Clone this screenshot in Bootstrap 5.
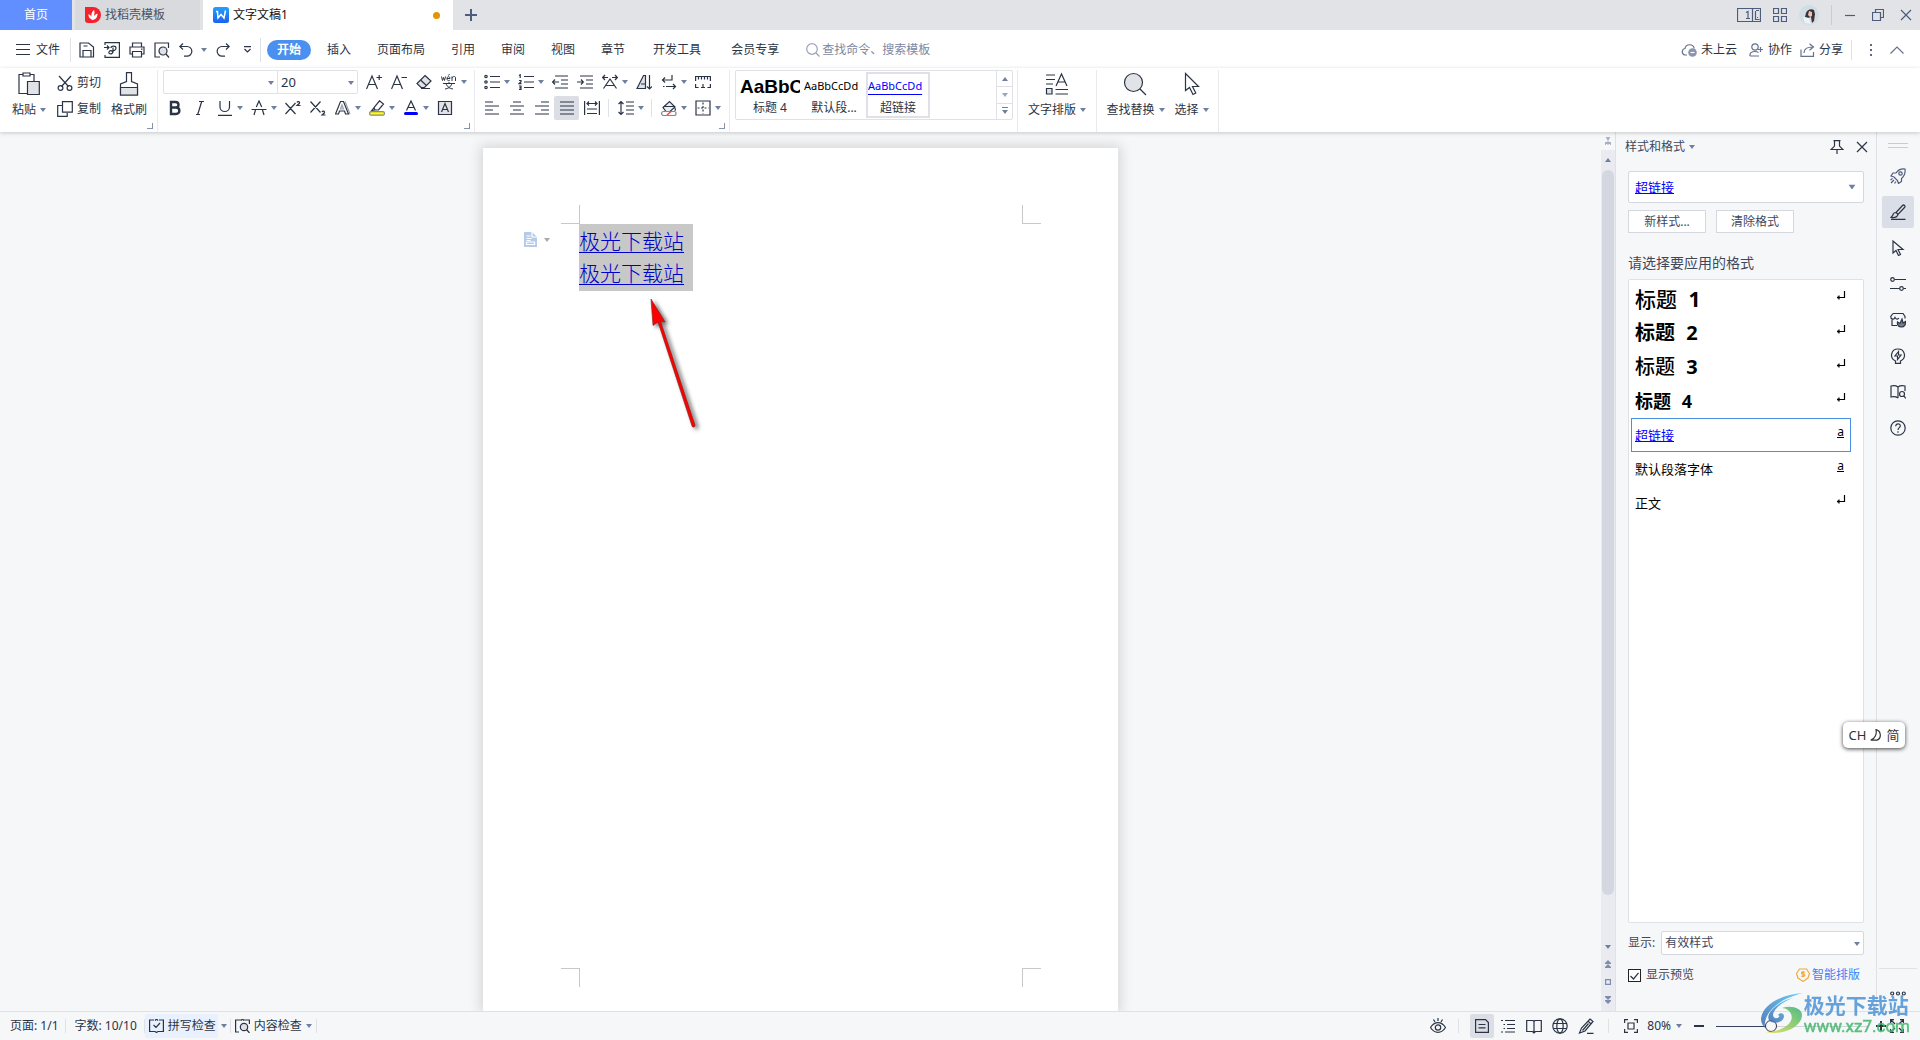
<!DOCTYPE html>
<html lang="zh-CN">
<head>
<meta charset="utf-8">
<meta name="viewport" content="width=device-width, initial-scale=1">
<title>文字文稿1</title>
<link href="https://cdn.jsdelivr.net/npm/bootstrap@5.3.0/dist/css/bootstrap.min.css" rel="stylesheet">
<style>
:root{--ink:#2b3445;--muted:#6f7f9f;--line:#dfe1e6;--surface:#f6f7f9}
body{font-family:"Noto Sans","Noto Sans CJK SC",sans-serif;font-size:12px;line-height:16px;color:var(--ink);background:var(--surface)}
button,input,select{font:inherit;color:inherit}
button{background:none;border:0;padding:0;white-space:nowrap}
a{color:inherit;text-decoration:none;white-space:nowrap}
svg{display:block;flex:none;fill:none;stroke:var(--ink);stroke-width:1.2}
svg.caret{width:6px;height:4px;fill:var(--muted);stroke:none}
select{appearance:none;outline:0;border:0;background:transparent}
/* title bar */
.titlebar{height:30px;background:#e1e3e7}
.titlebar svg{stroke:#4d5b7c}
.tab-home{width:72px;margin-right:3px;background:#628fff;color:#fff}
.tab-store{width:125px;padding-left:10px;margin-right:3px;background:#d9dadd;color:#4a5163}
.tab-doc{width:250px;padding-left:10px;background:#fff;color:#111}
.dirty{width:7px;height:7px;border-radius:50%;background:#e59400;margin-right:13px}
.tab-add{width:35px}
.win-ctl{gap:12px;padding-right:8px}
.vline{width:1px;background:var(--line)}
/* menu */
.menubar{height:38px;padding-top:1px;background:#fff}
.file-menu{padding-left:16px;gap:6px}
.quick{gap:9px;padding-left:8px}
.pill{height:20px;line-height:20px;width:44px;border-radius:10px;background:#4a90f0;color:#fff;font-weight:700;text-align:center}
.menus{padding-left:3px}
.menus a{padding:0 13px}
.menus a.wide{padding:0 15px}
.finder{border:0;outline:0;background:transparent;width:140px;padding:0}
.finder::placeholder{color:#7c87a3;opacity:1}
.menubar .soft{stroke:#66718d}
/* ribbon */
.ribbon{height:64px;background:#fff;padding-top:2px;box-shadow:0 1px 4px rgba(0,0,0,.2);z-index:3}
.ribbon-group{height:62px;border-right:1px solid #e9eaed;position:relative}
.launch{position:absolute;right:4px;bottom:3px;width:6px;height:6px;border:solid #8792ab;border-width:0 1px 1px 0}
.tool-row{height:24px;margin-bottom:2px}
.clip-pair{padding-top:1px;margin-left:11px}
.tool{width:25px;height:24px;display:flex;align-items:center;justify-content:center}
.tool.split{width:34px;justify-content:flex-start;padding-left:5px;gap:4px}
.tool.on,.view.on{background:#dbdfe5;border-radius:2px}
.tool-sep{width:9px;height:18px;display:flex;justify-content:center}
.combo{height:24px;border:1px solid var(--line);position:relative;background:#fff}
.combo input,.combo select{width:100%;height:100%;padding:0 3px;border:0;outline:0;background:transparent;display:block}
.combo .caret{position:absolute;right:3px;top:10px;pointer-events:none}
.font-name{width:115px;margin-left:1px;border-radius:2px 0 0 2px}
.font-size{width:80px;margin-right:3px;border-left:0;border-radius:0 2px 2px 0}
.font-size select{font-size:13px}
.big{height:48px;display:flex;flex-direction:column;align-items:center;justify-content:space-between;padding-top:2px}
.gallery{width:278px;height:50px;border:1px solid var(--line);border-radius:2px;padding-left:2px}
.sample{width:64px;height:46px;padding:3px 0 0;margin-top:1px;overflow:hidden;text-align:left;border:2px solid transparent}
.sample.on{border-color:#dfe0e8}
.sample span{display:block;height:23px;line-height:18px;color:#000;font-size:11px}
.sample b{display:block;font-weight:400;text-align:center;line-height:16px}
.sample .h4s{font:700 19px/19px "Liberation Sans",sans-serif}
.sample .lnk{color:#00f;text-decoration:underline;text-underline-offset:4px}
.gal-nav{width:16px;border-left:1px solid var(--line)}
.gal-nav button{flex:1;display:flex;align-items:center;justify-content:center}
.gal-nav button+button{border-top:1px solid var(--line)}
/* document */
.canvas{padding-top:16px;overflow:hidden}
.sheet{width:635px;background:#fff;box-shadow:0 0 12px 3px rgba(0,0,0,.13);padding:57px 77px 24px 78px;position:relative}
.mark-tl,.mark-tr,.mark-bl,.mark-br{width:19px;height:19px;border:0 solid #c8c8c8}
.mark-tl{border-width:0 1px 1px 0}.mark-tr{border-width:0 0 1px 1px}
.mark-bl{border-width:1px 1px 0 0}.mark-br{border-width:1px 0 0 1px}
.gutter{width:18px}
.gutter button{margin-left:-37px;margin-top:8px;display:flex;align-items:center;gap:7px}
.picked{background:#c8c8c8;padding:0 9px 3px 0;font:300 21px/32px "Noto Sans CJK SC",sans-serif;color:#0000c8}
.picked a{display:block;text-decoration:underline;text-decoration-thickness:1px;text-underline-offset:3px}
.pointer{position:absolute;left:160px;top:146px}
/* scroll bar */
.scroller{width:15px;background:#e9ebf0;border-right:1px solid var(--line)}
.scroller .splitter{height:18px;background:var(--surface);width:100%;display:flex;align-items:center;justify-content:center}
.thumb{width:12px;border-radius:6px;background:#d4d7e0}
.scroll-foot{gap:11px;padding:50px 0 7px}
/* style pane */
.pane{width:261px;padding:0 12px;border-right:1px solid var(--line);color:#3f4759}
.pane-head{height:30px;margin:0 -4px 0 -3px}
.pane .combo{border-color:#d5d8de;border-radius:2px}
.current{height:32px;margin-top:9px;color:#00f}
.current select{font-size:13px;padding:0 6px;text-decoration:underline}
.current .caret{right:8px;top:13px;transform:scale(1.2)}
.pane-btn{width:78px;height:23px;border:1px solid #d5d8de;background:#fff}
.pane-label{font-size:14px;line-height:20px;margin:20px 0 6px}
.pane-btns{gap:10px;padding-top:7px}
.styles{background:#fff;border:1px solid var(--line);border-radius:2px;padding:2px 12px 0 2px}
.styles button{width:100%;height:34px;border:1px solid transparent;padding:0 4px 0 3px;color:#000;font-size:13px;line-height:22px}
.styles button.on{border-color:#4a90e2;color:#00f}
.styles button.on span{text-decoration:underline}
.styles .h1s{font-size:21px;font-weight:500}
.styles .h2s{font-size:20px;font-weight:700}
.styles .h3s{font-size:20px;font-weight:500}
.styles .h4r{font-size:18px;font-weight:700}
.styles i{font-style:normal;font-weight:700;margin-left:6px}
.styles .kind{font-size:12px;line-height:12px;color:#000;border-bottom:1px solid #000;height:12px;margin:0 2px 6px 0}
.styles svg{stroke:#000;margin-bottom:8px}
.shown{height:24px}
.box-check{appearance:none;width:13px;height:13px;margin:0;border:1px solid #222;background:#fff;display:block}
.check-wrap{position:relative}
.check-wrap svg{position:absolute;left:2px;top:5px;pointer-events:none}
/* side rail */
.rail{width:43px;padding-right:2px}
.rail button{width:32px;height:32px;margin-bottom:4px;display:flex;align-items:center;justify-content:center;border-radius:2px}
.rail button.on{background:#dadee6}
.grip{width:20px;height:5px;border:solid #c9ccd2;border-width:1px 0;margin:11px 0 12px}
.rail-foot{width:38px;border-top:1px solid var(--line);padding-top:22px;height:43px}
/* status bar */
.statusbar{height:29px;border-top:1px solid var(--line)}
.statusbar .vline{height:14px}
.page-no{padding:0 6px 0 10px}
.word-no{padding:0 7px 0 9px}
.checker{height:24px;padding:0 2px 0 4px;background:#e8f1fd}
.views{gap:2px;margin:0 10px 0 11px}
.view{width:24px;height:24px;display:flex;align-items:center;justify-content:center}
.percent{gap:5px;padding-left:9px}
.fit{margin-left:15px}
.zoomer{appearance:none;width:152px;height:14px;margin:0 8px 0 12px;background:linear-gradient(90deg,#35415d 38%,#cfd4de 38%) center/100% 1px no-repeat}
.zoomer::-webkit-slider-thumb{appearance:none;width:12px;height:12px;border-radius:50%;border:1px solid #333;background:#f6f7f9}
/* floating items */
.ime{position:absolute;right:15px;bottom:292px;width:62px;height:26px;border-radius:5px;background:#fff;box-shadow:0 1px 4px rgba(0,0,0,.75);font-size:13px;color:#333;z-index:5}
.brand{position:absolute;right:10px;bottom:4px;z-index:6;opacity:.88;pointer-events:none}
.brand svg{stroke:none}
.brand strong{display:block;font:700 21px/24px "Noto Sans CJK SC",sans-serif;color:#5296d6}
.brand em{display:block;font:400 17px/20px Roboto,sans-serif;color:#45b86c;-webkit-text-stroke:.5px #45b86c}
</style>
<script src="https://cdn.jsdelivr.net/npm/bootstrap@5.3.0/dist/js/bootstrap.bundle.min.js"></script>
</head>
<body class="vh-100 overflow-hidden d-flex flex-column position-relative">
<svg width="0" height="0" class="position-absolute"><defs>
<symbol id="dn" viewBox="0 0 6 4"><path d="M0 0h6L3 4z"/></symbol>
<symbol id="up" viewBox="0 0 6 4"><path d="M0 4h6L3 0z"/></symbol>
</defs></svg>

<header class="titlebar d-flex align-items-stretch">
  <button class="tab-home">首页</button>
  <button class="tab-store d-flex align-items-center gap-1">
    <svg width="16" height="16" style="stroke:none"><path fill="#f5222d" d="M0 0h8a8 8 0 1 1 0 16H3a3 3 0 0 1-3-3z"/><path fill="#fff" d="M7.500 13C5 12 3 10 3.500 7c1.500 1 2.500 1.500 3 3C6 7 7 4.500 9 3c1 2 .5 4-.3 6.500C9.500 8 11 7 12.500 6.500 12.500 10 11 12.500 7.500 13z"/></svg>找稻壳模板</button>
  <button class="tab-doc d-flex align-items-center gap-1">
    <svg width="16" height="16"><defs><linearGradient id="wg" x2="0" y2="1"><stop stop-color="#22a0fb"/><stop offset="1" stop-color="#1a62f2"/></linearGradient></defs><rect width="16" height="16" rx="2.500" fill="url(#wg)" stroke="none"/><path stroke="#fff" stroke-width="1.500" d="M3 4.500h1.500L5 11l3-3.500 3 3.500 1.500-7.500"/></svg>
    <span class="flex-grow-1 text-start">文字文稿1</span><span class="dirty"></span></button>
  <button class="tab-add d-flex align-items-center justify-content-center" aria-label="新建"><svg width="12" height="12" style="stroke-width:2"><path d="M6 0v12M0 6h12"/></svg></button>
  <div class="win-ctl ms-auto d-flex align-items-center">
    <button aria-label="窗口"><svg width="24" height="14"><path d="M.5.500h23v13H.5zM15.500.500v13M9 4.500l2-1v7M9 10.500h4M18.500 3v8.500h4M19 2.500h3M20 9.500h1"/></svg></button>
    <button aria-label="应用"><svg width="14" height="14"><path d="M.5.500h5v5h-5zM8.500.500h5v5h-5zM.5 8.500h5v5h-5zM8.500 8.500h5v5h-5z"/></svg></button>
    <button aria-label="账号"><svg width="20" height="20" style="stroke:none"><circle cx="10" cy="10" r="10" fill="#cfdde4"/><path fill="#3f3035" d="M7 8c1-3 5-5 8-3l1 4-1 7-2 2-1-6-3 1-3-1z"/><path fill="#e9c3b4" d="M10 6l3 1v4l-2 1-2-2z"/><path fill="#e9f4f7" d="M4 12l6 1 2 6-6-1z"/></svg></button>
    <div class="vline" style="height:20px;background:#c8cbd2"></div>
    <button aria-label="最小化"><svg width="12" height="12"><path d="M1 6.500h10"/></svg></button>
    <button class="mx-1" aria-label="还原"><svg width="12" height="12"><path d="M.5 3.500h8v8h-8zM3.500 3V.500h8v8H9"/></svg></button>
    <button aria-label="关闭"><svg width="12" height="12"><path d="M1 1l10 10M11 1L1 11"/></svg></button>
  </div>
</header>

<nav class="menubar d-flex align-items-center">
  <button class="file-menu d-flex align-items-center"><svg width="14" height="11"><path d="M0 .500h14M0 5.500h14M0 10.500h14"/></svg><span class="pe-2">文件</span></button>
  <div class="vline" style="height:24px;margin-left:2px"></div>
  <div class="quick d-flex align-items-center">
    <button aria-label="保存"><svg width="16" height="16"><path d="M1 1h8.500l5 4v10H1zM4 15V8.500h8V15M4.500 4h4"/></svg></button>
    <button aria-label="输出为PDF"><svg width="16" height="16"><path d="M1 3V.600h14.400v14.800H1V13M0 5.500h5M3 3.500l2 2-2 2M7 6c0-2.500 5-2.500 5 0S9.500 9 8.500 8M9 5.500v4c0 3-5 3-4 .5s3-1 4 0"/></svg></button>
    <button aria-label="打印"><svg width="16" height="16"><path d="M3.500 5V1h9v4M3.500 12H1V5h14v7h-2.500M3.500 9.500h9V15h-9zM12 7.200h1.500"/></svg></button>
    <button aria-label="打印预览"><svg width="16" height="16"><path d="M6 15H1V1h13.500v5"/><circle cx="9" cy="9" r="4" fill="#dfe1e6"/><path d="M12 12l3 3.500"/></svg></button>
    <button class="d-flex align-items-center gap-2" aria-label="撤销"><svg width="14" height="14"><path d="M4 .500L.8 3.500 4 6.500M1 3.500h7a4.800 4.800 0 0 1 0 9.700H5"/></svg><svg class="caret"><use href="#dn"/></svg></button>
    <button aria-label="恢复"><svg width="14" height="14"><path d="M10 .500l3.200 3L10 6.500M13 3.500H6a4.800 4.800 0 0 0 0 9.700h3"/></svg></button>
    <button class="px-1" aria-label="更多"><svg width="9" height="7"><path d="M1 .600h7M1.500 3l3 3 3-3"/></svg></button>
  </div>
  <div class="vline" style="height:24px;margin:0 6px 0 4px"></div>
  <button class="pill">开始</button>
  <div class="menus d-flex">
    <a href="#">插入</a><a href="#">页面布局</a><a href="#">引用</a><a href="#">审阅</a><a href="#">视图</a><a href="#">章节</a><a href="#" class="wide">开发工具</a><a href="#" class="wide">会员专享</a>
  </div>
  <label class="d-flex align-items-center ps-2 ms-1" style="gap:2px"><svg width="14" height="14" style="stroke:#9aa3b8"><circle cx="6" cy="6" r="5.300"/><path d="M10 10l3.500 3.500"/></svg><input class="finder" placeholder="查找命令、搜索模板" aria-label="查找命令"></label>
  <div class="ms-auto d-flex align-items-center gap-2 pe-3">
    <button class="d-flex align-items-center gap-1 me-1"><svg class="soft" width="16" height="14"><path d="M6 12H4a3.300 3.300 0 0 1 0-6.500 4.700 4.700 0 0 1 9.200 0"/><circle cx="11.500" cy="9.500" r="4.300" fill="#8a94ab" stroke="none"/><path stroke="#fff" d="M9.500 9.500h4"/></svg>未上云</button>
    <button class="d-flex align-items-center gap-1"><svg class="soft" width="15" height="14"><circle cx="6" cy="4" r="3.200"/><path d="M1 13c-.5-3 1.500-4.500 5-4.500 1.500 0 2.500.300 3.500 1M1 13h9M11.500 4v5M9 6.500h5"/></svg>协作</button>
    <button class="d-flex align-items-center gap-1"><svg class="soft" width="15" height="14"><path d="M1 6.500v6.800h12.500V9M4 10c0-4 3-6 8.500-6M9.500.800l4 3.200-4 3.200"/></svg>分享</button>
    <div class="vline" style="height:20px"></div>
    <button class="px-1" aria-label="更多"><svg width="14" height="14" style="fill:#5f6980;stroke:none"><path d="M6 1h2v2H6zM6 6h2v2H6zM6 11h2v2H6z"/></svg></button>
    <button aria-label="收起"><svg class="soft" width="14" height="8"><path d="M.5 7.500L7 1l6.500 6.500"/></svg></button>
  </div>
</nav>

<section class="ribbon d-flex position-relative">
  <div class="ribbon-group d-flex" style="width:158px;padding-left:12px">
    <button class="big"><svg width="22" height="24"><path d="M5 2.500H1v19h8M16 9V2.500h-4M5 1h7v3H5z"/><path d="M9.500 9.500h11.800v13H9.500z" fill="#e1e3e7"/></svg><span class="d-flex align-items-center gap-1">粘贴<svg class="caret"><use href="#dn"/></svg></span></button>
    <div class="clip-pair">
      <button class="tool-row d-flex align-items-center gap-1"><svg width="16" height="16"><path d="M2 1l9.500 10.500M14 1L4.500 11.500"/><circle cx="3.500" cy="13" r="2.400"/><circle cx="12.500" cy="13" r="2.400"/></svg>剪切</button>
      <button class="tool-row d-flex align-items-center gap-1"><svg width="16" height="16"><path d="M5.500.600h9.800v10.500H5.500zM5 4.500H.7v10.800h9.500V12"/></svg>复制</button>
    </div>
    <button class="big" style="margin-left:10px"><svg width="20" height="24"><path d="M7.500 9.500V.600h5v8.900l6 2.500v11H1.500V12z"/><path d="M1.500 15.500h17V23h-17z" fill="#e1e3e7"/></svg><span>格式刷</span></button>
    <i class="launch"></i>
  </div>

  <div class="ribbon-group" style="width:317px;padding-left:4px">
    <div class="tool-row d-flex">
      <div class="combo font-name"><input aria-label="字体"><svg class="caret"><use href="#dn"/></svg></div>
      <div class="combo font-size"><select aria-label="字号"><option>20</option></select><svg class="caret"><use href="#dn"/></svg></div>
      <button class="tool" aria-label="增大字号"><svg width="16" height="16"><path d="M.5 15L6 2l5.500 13M2.500 10.500h7M10.500 3.500H16M13.200 1v5"/></svg></button>
      <button class="tool" aria-label="减小字号"><svg width="16" height="16"><path d="M.5 15L6 2l5.500 13M2.500 10.500h7M10.500 3.500H16"/></svg></button>
      <button class="tool" aria-label="清除格式"><svg width="16" height="16"><path d="M9 1.500l6 5.500-6.500 6.500H5L1 9.500z" fill="#dfe1e6"/><path d="M4.500 6l6 5.500M5 14.500h9"/></svg></button>
      <button class="tool split" aria-label="拼音指南"><svg width="16" height="16"><path d="M.5 2.500l1 4 1-3 1 3 1-4M6 4.500h3c0-2.500-3-2.500-3 0 0 2.500 2 2.500 3 1.500M7.500 1.500l1-1.500M11 7V2.500M11 4c1-2 3.500-2 3.500 0v3M2 9.500h12M8 8v1.500M5 9.500c1.500 4 4 5 7 5.500M11 9.500c-1.500 4-4 5-7 5.500" stroke-width="1"/></svg><svg class="caret"><use href="#dn"/></svg></button>
    </div>
    <div class="tool-row d-flex">
      <button class="tool" aria-label="加粗"><svg width="16" height="16" style="stroke-width:2.400"><path d="M4 2h4.500c4 0 4 5.500 0 5.500H4zM4 7.500h5c4.500 0 4.500 6.500 0 6.500H4z"/></svg></button>
      <button class="tool" aria-label="倾斜"><svg width="16" height="16"><path d="M7 1.500h5M4 14.500h4M9.700 1.500l-4 13"/></svg></button>
      <button class="tool split" aria-label="下划线"><svg width="16" height="16"><path d="M3 1v6c0 6 9.500 6 9.500 0V1M1 15.300h14"/></svg><svg class="caret"><use href="#dn"/></svg></button>
      <button class="tool split" aria-label="删除线"><svg width="16" height="16"><path d="M3 15l1.500-5M13 15l-1.500-5M5.300 7L8 1l2.700 6M.5 9.500h15"/></svg><svg class="caret"><use href="#dn"/></svg></button>
      <button class="tool" aria-label="上标"><svg width="16" height="16"><path d="M.5 3l10 11M10.500 3l-10 11M12 2.500c.5-1.500 3-1 2.500.5-.3 1-1.500 1.500-2.500 2.500h3.500"/></svg></button>
      <button class="tool" aria-label="下标"><svg width="16" height="16"><path d="M.5 1.500l10 11M10.500 1.500l-10 11M12 12c.5-1.500 3-1 2.500.5-.3 1-1.500 1.500-2.500 2.500h3.500"/></svg></button>
      <button class="tool split" aria-label="文字效果"><svg width="16" height="16"><path d="M5.500 1.500h3l5 12.500h-3l-1-3h-5l-1 3h-3z" fill="#fff"/><path d="M7 5l1.500 4h-3zM10 1.500L15 14" stroke="#9aa0ad"/></svg><svg class="caret"><use href="#dn"/></svg></button>
      <button class="tool split" aria-label="突出显示"><svg width="16" height="16"><path d="M10.500.800l4 3.200-5 6H6L5 7.500zM5 8l-2.500 2.800h3"/><rect x=".6" y="11.600" width="14.800" height="3.600" rx="1.500" fill="#ff0" stroke="#888"/></svg><svg class="caret"><use href="#dn"/></svg></button>
      <button class="tool split" aria-label="字体颜色"><svg width="16" height="16"><path d="M3.500 10.500L8 1l4.500 9.500M5 7.500h6"/><rect x="1" y="12" width="14" height="3" rx="1.500" fill="#00f" stroke="none"/></svg><svg class="caret"><use href="#dn"/></svg></button>
      <button class="tool" aria-label="字符底纹"><svg width="16" height="16"><path d="M1.500 1.500h13v13h-13z" fill="#e1e3e7"/><path d="M4.500 12L8 3.500l3.500 8.500M6 9.500h4"/></svg></button>
    </div>
    <i class="launch"></i>
  </div>

  <div class="ribbon-group" style="width:255px;padding-left:4px">
    <div class="tool-row d-flex">
      <button class="tool split" aria-label="项目符号"><svg width="16" height="16"><path d="M6 2.500h10M6 8h10M6 13.500h10"/><circle cx="2" cy="2.500" r="1.200"/><circle cx="2" cy="8" r="1.200"/><circle cx="2" cy="13.500" r="1.200"/></svg><svg class="caret"><use href="#dn"/></svg></button>
      <button class="tool split" aria-label="编号"><svg width="16" height="16"><path d="M6 2.500h10M6 8h10M6 13.500h10M1 1.500L2.200.800V4M1 6.500h2v1.300L1 9.700h2.500M1 12h2v3.300H1M1.500 13.600H3"/></svg><svg class="caret"><use href="#dn"/></svg></button>
      <button class="tool" aria-label="减少缩进"><svg width="16" height="16"><path d="M3 2h13M9 6h7M9 10h7M3 14h13M.7 8H7M3 5.500L.7 8 3 10.500"/></svg></button>
      <button class="tool" aria-label="增加缩进"><svg width="16" height="16"><path d="M3 2h13M9 6h7M9 10h7M3 14h13M0 8h6.300M4 5.500L6.300 8 4 10.500"/></svg></button>
      <button class="tool split" aria-label="中文版式"><svg width="16" height="16"><path d="M.8 3.500H6M10 3.500h5.300M3 1L.7 3.500 3 6M13 1l2.300 2.500L13 6M1.500 14.500L8 5l6.500 9.500M4 11.500h8"/></svg><svg class="caret"><use href="#dn"/></svg></button>
      <button class="tool" aria-label="排序"><svg width="16" height="16"><path d="M1 14.500L7.500 1.500h2v13z" fill="#dfe1e6"/><path d="M5 10h4.500M13.500 1v14M11 12.500l2.500 2.500 2.500-2.500"/></svg></button>
      <button class="tool split" aria-label="显示标记"><svg width="16" height="16"><path d="M11 1v5H1.500M4 3.500L1.500 6 4 8.500M5 12.500h9.500M12 10l2.500 2.500L12 15M2 12.500h1.500"/></svg><svg class="caret"><use href="#dn"/></svg></button>
      <button class="tool" aria-label="制表位"><svg width="16" height="16"><path d="M.6 7V2.500h14.800V7M3.500 2.500v3M6.500 2.500v3M9.500 2.500v3M12.500 2.500v3M.6 10v3.500h3M15.400 10v3.500h-3M6 13.500h4M8 10v3.500"/></svg></button>
    </div>
    <div class="tool-row d-flex align-items-center">
      <button class="tool" aria-label="左对齐"><svg width="14" height="14"><path d="M0 1h8M0 5h14M0 9h8M0 13h14"/></svg></button>
      <button class="tool" aria-label="居中对齐"><svg width="14" height="14"><path d="M3 1h8M0 5h14M3 9h8M0 13h14"/></svg></button>
      <button class="tool" aria-label="右对齐"><svg width="14" height="14"><path d="M6 1h8M0 5h14M6 9h8M0 13h14"/></svg></button>
      <button class="tool on" aria-label="两端对齐"><svg width="14" height="14"><path d="M0 1h14M0 5h14M0 9h14M0 13h14"/></svg></button>
      <button class="tool" aria-label="分散对齐"><svg width="16" height="16"><path d="M.6 1v14M15.400 1v14M2.500 3.500h11M5 1.500l-2 2 2 2M11 1.500l2 2-2 2M3 9h10M3 13.500h10"/></svg></button>
      <span class="tool-sep"><i class="vline"></i></span>
      <button class="tool split" aria-label="行距"><svg width="16" height="16"><path d="M3 1.500v13M.5 4L3 1.500 5.500 4M.5 12L3 14.500 5.500 12M8 2h8M8 6h8M8 10h8M8 14h8"/></svg><svg class="caret"><use href="#dn"/></svg></button>
      <span class="tool-sep"><i class="vline"></i></span>
      <button class="tool split" aria-label="底纹颜色"><svg width="16" height="16"><path d="M2 7.500L8.500 1.500 14 7l-5 4.500H5z" fill="#eceef1"/><path d="M3 6.500h10M13.500 7.500c1.500 2 1 3 0 3"/><rect x=".6" y="11.500" width="14.500" height="4" rx="2" fill="#fff" stroke="#888"/><path stroke="#f33" d="M6 15l4-3.500"/></svg><svg class="caret"><use href="#dn"/></svg></button>
      <button class="tool split" aria-label="边框"><svg width="16" height="16"><path d="M1 1h14v14H1z"/><path d="M8 2.500v11M2.500 8h11" stroke-dasharray="2 1.500"/></svg><svg class="caret"><use href="#dn"/></svg></button>
    </div>
    <i class="launch"></i>
  </div>

  <div class="ribbon-group" style="width:288px;padding-left:5px">
    <div class="gallery d-flex">
      <button class="sample"><span class="h4s">AaBbC</span><b>标题 4</b></button>
      <button class="sample"><span>AaBbCcDd</span><b>默认段...</b></button>
      <button class="sample on"><span class="lnk">AaBbCcDd</span><b>超链接</b></button>
      <div class="gal-nav ms-auto d-flex flex-column">
        <button aria-label="上一行"><svg class="caret"><use href="#up"/></svg></button>
        <button aria-label="下一行"><svg class="caret" opacity=".7"><use href="#dn"/></svg></button>
        <button aria-label="展开"><svg width="6" height="8" style="fill:#6f7f9f;stroke:none"><path d="M0 0h6v1H0zM0 3h6L3 7z"/></svg></button>
      </div>
    </div>
  </div>
  <div class="ribbon-group d-flex justify-content-center" style="width:79px">
    <button class="big"><svg width="24" height="24"><path d="M1 3h9M1 7.500h9M1 12h7M11 14l5.500-12L22 14M13 10h7M10.500 17.500H23M10.500 22H23"/><path d="M1.500 16.500h5.500v5.500H1.500z" fill="#dfe1e6"/></svg><span class="d-flex align-items-center gap-1">文字排版<svg class="caret"><use href="#dn"/></svg></span></button>
  </div>
  <div class="ribbon-group d-flex justify-content-center" style="width:122px;gap:10px">
    <button class="big"><svg width="24" height="24"><circle cx="10.500" cy="10.500" r="9" fill="#e1e3e7"/><path d="M17 17l6 6"/></svg><span class="d-flex align-items-center gap-1">查找替换<svg class="caret"><use href="#dn"/></svg></span></button>
    <button class="big"><svg width="16" height="24"><path d="M1.500 1.500v17l4-3 3.500 7 2.800-1.500L8.500 14.500h6z" fill="#fff"/></svg><span class="d-flex align-items-center gap-1">选择<svg class="caret"><use href="#dn"/></svg></span></button>
  </div>
</section>

<main class="flex-grow-1 d-flex" style="min-height:0">
  <div class="canvas flex-grow-1 d-flex justify-content-center">
    <article class="sheet d-flex flex-column">
      <div class="d-flex justify-content-between"><i class="mark-tl"></i><i class="mark-tr"></i></div>
      <div class="flex-grow-1 d-flex align-items-start">
        <div class="gutter"><button aria-label="段落布局"><svg width="13" height="15" style="stroke:none"><path fill="#b5cbea" d="M0 0h8l5 5v10H0z"/><path stroke="#fff" d="M8 0v5h5M2.500 4h4M2.500 6.500h5M2.500 10v2.500h8V10h-8M2.500 8.500h4"/></svg><svg class="caret" style="fill:#aaa"><use href="#dn"/></svg></button></div>
        <div class="picked"><a href="#">极光下载站</a><a href="#">极光下载站</a></div>
      </div>
      <div class="d-flex justify-content-between"><i class="mark-bl"></i><i class="mark-br"></i></div>
      <svg class="pointer" width="64" height="144" style="stroke:none;filter:drop-shadow(3px 2px 2px rgba(0,0,0,.6))"><path fill="#f00" stroke="#7a2020" stroke-width=".6" d="M8 5l14 23-4.500-1L52 131a1.500 1.500 0 0 1-3 1L15 28l-5 3.500z"/></svg>
    </article>
  </div>

  <div class="scroller d-flex flex-column align-items-center" aria-hidden="true">
    <div class="splitter"><svg width="8" height="8" style="fill:#a9b0c3;stroke:none"><path d="M2 0h4v1L4.500 3v2H7v3H6V7H4.500v1h-1V7H2v1H1V5h2.500V3L2 1z"/></svg></div>
    <svg class="caret my-2"><use href="#up"/></svg>
    <div class="thumb flex-grow-1"></div>
    <div class="scroll-foot d-flex flex-column align-items-center">
      <svg class="caret"><use href="#dn"/></svg>
      <svg width="6" height="8" style="fill:#7f8cab;stroke:none"><path d="M0 3l3-3 3 3v1H0zM0 7l3-3 3 3v1H0z"/></svg>
      <svg width="6" height="6" style="stroke:#7f8cab"><path d="M.6.600h4.800v4.800H.6z"/></svg>
      <svg width="6" height="8" style="fill:#7f8cab;stroke:none"><path d="M0 0h6v1L3 4 0 1zM0 4h6v1L3 8 0 5z"/></svg>
    </div>
  </div>

  <aside class="pane d-flex flex-column">
    <div class="pane-head d-flex align-items-center">
      <button class="d-flex align-items-center gap-1 me-auto">样式和格式<svg class="caret"><use href="#dn"/></svg></button>
      <button class="me-2 pe-1" aria-label="固定"><svg width="14" height="14"><path d="M3.500.600h7M4.500.600v5.500L1 9.500h12L9.500 6.100V.600M7 9.500V14"/></svg></button>
      <button aria-label="关闭"><svg width="12" height="12"><path d="M1 1l10 10M11 1L1 11"/></svg></button>
    </div>
    <div class="combo current"><select aria-label="当前样式"><option>超链接</option></select><svg class="caret"><use href="#dn"/></svg></div>
    <div class="pane-btns d-flex"><button class="pane-btn">新样式...</button><button class="pane-btn">清除格式</button></div>
    <div class="pane-label">请选择要应用的格式</div>
    <div class="styles flex-grow-1">
      <button class="d-flex justify-content-between align-items-center"><span class="h1s">标题 <i>1</i></span><svg width="11" height="9"><path d="M9.500 0v6.500H2M4 4.500v4M3 5.500v2"/></svg></button>
      <button class="d-flex justify-content-between align-items-center"><span class="h2s">标题 <i>2</i></span><svg width="11" height="9"><path d="M9.500 0v6.500H2M4 4.500v4M3 5.500v2"/></svg></button>
      <button class="d-flex justify-content-between align-items-center"><span class="h3s">标题 <i>3</i></span><svg width="11" height="9"><path d="M9.500 0v6.500H2M4 4.500v4M3 5.500v2"/></svg></button>
      <button class="d-flex justify-content-between align-items-center"><span class="h4r">标题 <i>4</i></span><svg width="11" height="9"><path d="M9.500 0v6.500H2M4 4.500v4M3 5.500v2"/></svg></button>
      <button class="on d-flex justify-content-between align-items-center"><span>超链接</span><b class="kind fw-normal">a</b></button>
      <button class="d-flex justify-content-between align-items-center"><span>默认段落字体</span><b class="kind fw-normal">a</b></button>
      <button class="d-flex justify-content-between align-items-center"><span>正文</span><svg width="11" height="9"><path d="M9.500 0v6.500H2M4 4.500v4M3 5.500v2"/></svg></button>
    </div>
    <div class="d-flex align-items-center mt-2 mb-2 pb-1" style="gap:6px"><label for="shown">显示:</label><div class="combo shown flex-grow-1"><select id="shown"><option>有效样式</option></select><svg class="caret"><use href="#dn"/></svg></div></div>
    <div class="d-flex align-items-center justify-content-between" style="padding-bottom:28px">
      <div class="check-wrap d-flex align-items-center"><input class="box-check" type="checkbox" id="prev" checked><svg width="9" height="8"><path d="M.5 4l3 3L8.500.800"/></svg><label style="padding-left:5px" for="prev">显示预览</label></div>
      <a href="#" class="d-flex align-items-center pe-1" style="color:#3f7ff5;gap:2px"><svg width="14" height="14" style="stroke:#f0a93a"><path d="M3.500 1h7l3 4.500L12 10l-5 3.400L2 10 .5 5.500zM8.800 4.500c-1-1-3.500-.8-3.300.7.200 1.300 3 .7 3.200 2 .2 1.500-2.500 1.700-3.500.7M7 3v6"/></svg>智能排版</a>
    </div>
  </aside>

  <aside class="rail d-flex flex-column align-items-center">
    <div class="grip"></div>
    <button aria-label="快捷"><svg width="16" height="16" style="stroke:#4d5b7c"><path d="M15 1c-4-.5-7 1-9 4H3L1 8l3 1 3.500 3.500 1 3 3-2v-3C14.500 8 15.500 5 15 1zM4 12l-3 3M2.500 10.500L.5 12M6 13.500L4.500 15.500"/><circle cx="10.500" cy="5.500" r="1.700"/></svg></button>
    <button class="on" aria-label="样式"><svg width="16" height="16"><path d="M14.500 1.500c1 1 .5 1.500 0 2L8 10.500 6 8.500l6.500-7c.5-.5 1.200-.8 2 0zM6 8.500c-2 0-3 1-3.300 3L1 13.500c3 .5 6 0 7-3M1 15.300h14.500"/></svg></button>
    <button aria-label="选择"><svg width="14" height="16"><path d="M2 1v12l3-2.500 2.500 5 2-1-2.500-5h5z"/></svg></button>
    <button aria-label="属性"><svg width="16" height="14"><path d="M4.500 2.500H16M0 11.500h9.500M13.500 11.500H16"/><circle cx="2.500" cy="2.500" r="1.800"/><circle cx="11.500" cy="11.500" r="1.800"/></svg></button>
    <button aria-label="素材"><svg width="16" height="16"><path d="M2 7v6.500h5M3 1.500h10l2 3v2M3 1.500L.7 4.500C.7 7.500 4 8 5 5.500c1 2 3 2 4 .5"/><path d="M11.500 15c-3 0-4.500-2-4-5l2.500 1.500L12 7l1 4 2.500-1.500c.3 3-1 5.500-4 5.500z" fill="#77808f"/></svg></button>
    <button aria-label="推荐"><svg width="16" height="16"><path d="M5.500 13C-1 10 1 1 8 1s9 9 2.500 12v2.300h-5zM8.500 3.500L5 8h2.500v3.500L11 7H8.500z"/></svg></button>
    <button aria-label="词典"><svg width="16" height="16"><path d="M8 14c-2-1.500-5-1.500-7-1V2c2-.5 5-.5 7 1M8 3v11M8 3c2-1.500 5-1.500 7-1v5"/><circle cx="12" cy="10" r="2.500"/><path d="M14 12l1.700 2.500"/></svg></button>
    <button aria-label="帮助"><svg width="16" height="16"><circle cx="8" cy="8" r="7.200"/><path d="M5.700 6.200c0-3.200 4.800-3 4.600-.2C10.200 7.600 8 7.800 8 10M8 11.300v1.400"/></svg></button>
    <div class="rail-foot mt-auto d-flex justify-content-center"><svg width="16" height="5"><circle cx="2.200" cy="2.500" r="1.500"/><circle cx="8" cy="2.500" r="1.500"/><circle cx="13.800" cy="2.500" r="1.500"/></svg></div>
  </aside>
</main>

<footer class="statusbar d-flex align-items-center">
  <span class="page-no">页面: 1/1</span><i class="vline"></i>
  <span class="word-no">字数: 10/10</span><i class="vline"></i>
  <button class="checker d-flex align-items-center gap-1"><svg width="15" height="14"><path d="M5 1H.6v11.500H6l1.500 1 1.500-1h5.400V1H10M4.500 6l2.500 2.500L11 4M6 1.500L7.500 0 9 1.500"/></svg>拼写检查</button>
  <svg class="caret" style="margin:0 3px"><use href="#dn"/></svg><i class="vline"></i>
  <button class="d-flex align-items-center gap-1 ps-1"><svg width="15" height="14"><path d="M4 13H.6V1H6M9 1h5.400v4M6 1.500L7.500 0 9 1.500"/><circle cx="9" cy="8" r="3.700" fill="#dfe1e6"/><path d="M11.500 10.500l3 3.500"/></svg>内容检查<svg class="caret"><use href="#dn"/></svg></button><i class="vline ms-1"></i>

  <div class="ms-auto d-flex align-items-center" style="padding-right:16px">
    <button class="me-1 pe-2" aria-label="护眼模式"><svg width="16" height="16"><path d="M.5 9.500c4-6.500 11-6.500 15 0-4 6.500-11 6.500-15 0zM8 0v3M3.500 1.500L5 4M12.500 1.500L11 4"/><circle cx="8" cy="9.500" r="2.700"/></svg></button>
    <i class="vline"></i>
    <div class="views d-flex align-items-center">
      <button class="view on" aria-label="页面视图"><svg width="14" height="14"><path d="M.6.600h10l2.800 3v9.800H.6zM3.500 5.500h7M3.500 8.800h7"/></svg></button>
      <button class="view" aria-label="大纲"><svg width="14" height="14"><path d="M4 1.500h10M6 5.500h8M6 9.500h8M4 13h10M0 1.500h2M2.500 5.500h1.500M2.500 9.500h1.500M0 13h2"/></svg></button>
      <button class="view" aria-label="阅读版式"><svg width="16" height="16"><path d="M8 15l-1.500-1.500H.7V2.500H7l1 1 1-1h6.300v11H9.500zM8 3.500V15"/></svg></button>
      <button class="view" aria-label="Web版式"><svg width="16" height="16"><circle cx="8" cy="8" r="7.200"/><ellipse cx="8" cy="8" rx="3.200" ry="7.200"/><path d="M1.500 5.500h13M1.500 10.500h13"/></svg></button>
      <button class="view" aria-label="写作模式"><svg width="16" height="16"><path d="M12 1l3 2.500L7 13l-5.500 2L3.500 10zM10 3l3 3M10.500 5.500l-6 7M9 15.300h6.500"/></svg></button>
    </div>
    <i class="vline"></i>
    <button class="fit" aria-label="适合页宽"><svg width="14" height="14"><path d="M.6 4V.600H4M10 .600h3.400V4M13.400 10v3.400H10M4 13.400H.6V10M4 4h6v6H4z"/></svg></button>
    <button class="percent d-flex align-items-center">80%<svg class="caret"><use href="#dn"/></svg></button>
    <button class="ps-2 ms-1" aria-label="缩小"><svg width="10" height="10" style="stroke-width:2"><path d="M0 5h10"/></svg></button>
    <input class="zoomer" type="range" min="0" max="100" value="35" aria-label="显示比例">
    <button aria-label="放大"><svg width="10" height="10" style="stroke-width:2"><path d="M0 5h10M5 0v10"/></svg></button>
    <button class="ps-1" aria-label="全屏"><svg width="14" height="14"><path d="M.6 4V.600H4M10 .600h3.400V4M13.400 10v3.400H10M4 13.400H.6V10M1 1l4 4M13 1L9 5M1 13l4-4M13 13L9 9"/></svg></button>
  </div>
</footer>

<div class="ime d-flex align-items-center justify-content-center gap-1">CH<svg width="12" height="12" style="stroke:#333"><path d="M6 .600c5 1 6 8.500 1 10.500H.8C5 9.500 7 5 6 .600z"/></svg>简</div>
<div class="brand d-flex align-items-center">
  <svg width="44" height="44" viewBox="0 0 44 44"><defs><linearGradient id="b1" x1="1" y1="0" x2="0" y2="1"><stop stop-color="#5cc6f2"/><stop offset="1" stop-color="#3c6fb4"/></linearGradient><linearGradient id="b2" x1="1" y1="0" x2="0" y2="1"><stop stop-color="#39b37c"/><stop offset="1" stop-color="#e3e04a"/></linearGradient></defs>
  <path fill="url(#b1)" d="M43 1C22 2 2 13 1 27c0 4 2 7 4 9-2-12 9-28 38-35z"/><path fill="url(#b1)" d="M33 6C18 9 5 22 9 28c3 5 15 3 15-4 0-3-4-4-6-1 3 1 0 4-3 3-6-3 3-15 18-20z"/><path fill="url(#b2)" d="M22 16c9-3 20 0 20 7 0 12-20 21-36 17 16 0 29-9 25-18-1-3-5-6-9-6z"/></svg>
  <div><strong>极光下载站</strong><em>www.xz7.com</em></div>
</div>
</body>
</html>
